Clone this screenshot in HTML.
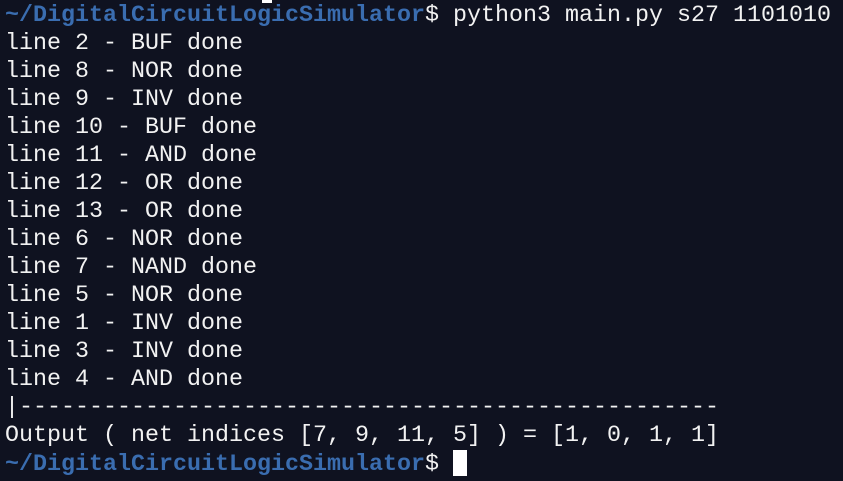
<!DOCTYPE html>
<html><head><style>
html,body{margin:0;padding:0;width:843px;height:481px;background:#0f1220;overflow:hidden}
pre{margin:0;position:absolute;left:5px;top:2px;font-family:"Liberation Mono",monospace;font-size:23.33px;line-height:28px;color:#f2f2f2}
.p{color:#3a6db0;font-weight:bold}
.c{display:inline-block;width:14px;height:26px;background:#fff;vertical-align:-6px}
.m{position:absolute;left:262px;top:0;width:10px;height:3px;background:#fff}
</style></head><body>
<div class="m"></div>
<pre><span class="p">~/DigitalCircuitLogicSimulator</span>$ python3 main.py s27 1101010
line 2 - BUF done
line 8 - NOR done
line 9 - INV done
line 10 - BUF done
line 11 - AND done
line 12 - OR done
line 13 - OR done
line 6 - NOR done
line 7 - NAND done
line 5 - NOR done
line 1 - INV done
line 3 - INV done
line 4 - AND done
|--------------------------------------------------
Output ( net indices [7, 9, 11, 5] ) = [1, 0, 1, 1]
<span class="p">~/DigitalCircuitLogicSimulator</span>$ <span class="c"></span></pre>
</body></html>
